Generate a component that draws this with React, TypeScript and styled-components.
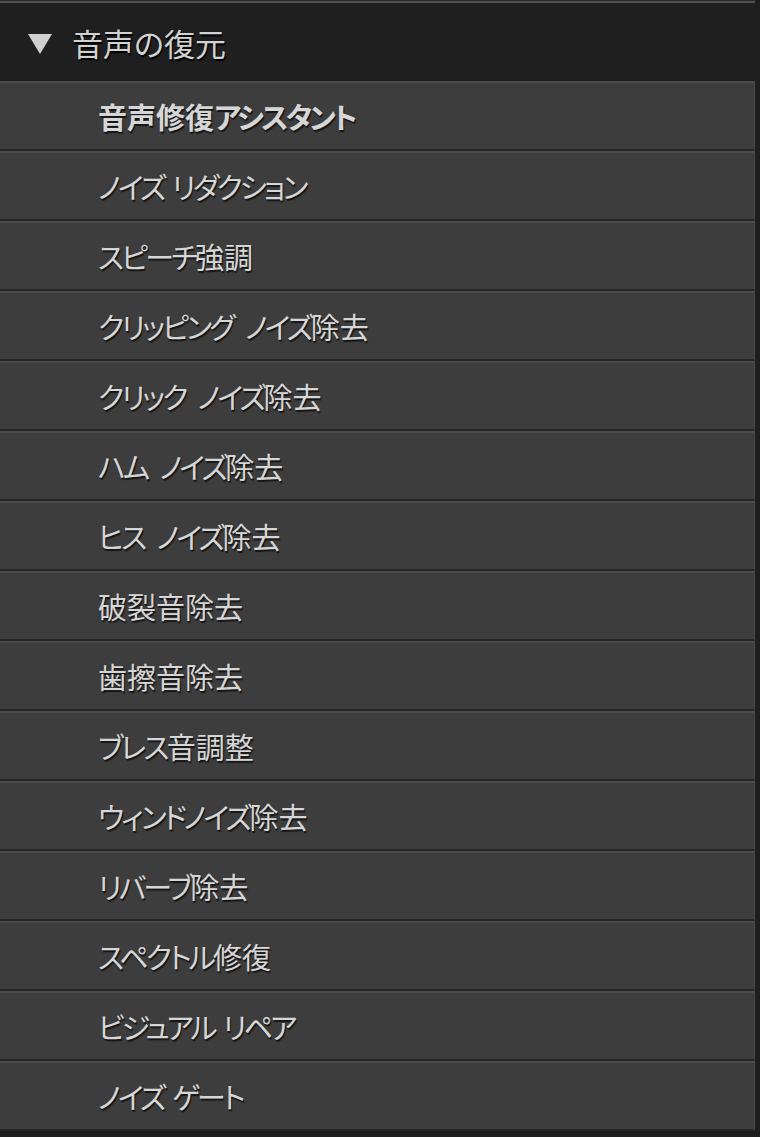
import React from "react";
import styled, { createGlobalStyle } from "styled-components";

const Global = createGlobalStyle`
  html, body { margin: 0; padding: 0; background: #1e1e1e; }
  body { font-family: "Noto Sans CJK JP", "Noto Sans", sans-serif; }
`;

const Panel = styled.div`
  width: 760px;
  height: 1137px;
  overflow: hidden;
  background: #1e1e1e;
  display: flex;
  flex-direction: column;
`;

const PrevEdge = styled.div`
  height: 4px;
  margin-right: 5px;
  box-sizing: border-box;
  border-top: 1px solid #2a2a2a;
  border-bottom: 1px solid #222;
  background: #505050;
`;

const Header = styled.div`
  height: 77px;
  display: flex;
  align-items: center;
  gap: 20px;
  padding-left: 28px;
  background: #1f1f1f;
  box-sizing: border-box;
`;

const Triangle = styled.span`
  width: 0;
  height: 0;
  border-left: 12px solid transparent;
  border-right: 12px solid transparent;
  border-top: 20px solid #cfcfcf;
  margin-top: 2px;
`;

const HeaderText = styled.span`
  font-size: 31px;
  color: #d2d2d2;
  font-feature-settings: "palt";
  text-shadow: 1px 2px 1px #000;
  line-height: 1;
`;

const Row = styled.div<{ $bold?: boolean }>`
  height: 70px;
  margin-right: 5px;
  box-sizing: border-box;
  background: #3d3d3d;
  border-top: 2px solid #4b4b4b;
  border-bottom: 2px solid #272727;
  border-right: 1px solid #4a4a4a;
  display: flex;
  align-items: center;
  padding-left: 98px;
  font-size: 29px;
  font-weight: ${(p) => (p.$bold ? 700 : 400)};
  color: #d6d6d6;
  font-feature-settings: "palt";
  text-shadow: 1px 2px 1px #151515;
  white-space: pre;
`;

const Kana = styled.span`
  letter-spacing: -2.8px;
`;

const Gap = styled.span<{ $w: number }>`
  display: inline-block;
  width: ${(p) => p.$w}px;
`;

const items = [
  "音声修復アシスタント",
  "ノイズ リダクション",
  "スピーチ強調",
  "クリッピング  ノイズ除去",
  "クリック  ノイズ除去",
  "ハム  ノイズ除去",
  "ヒス  ノイズ除去",
  "破裂音除去",
  "歯擦音除去",
  "ブレス音調整",
  "ウィンドノイズ除去",
  "リバーブ除去",
  "スペクトル修復",
  "ビジュアル リペア",
  "ノイズ ゲート",
];

function renderLabel(text: string) {
  const parts = text.match(/[\u30A0-\u30FF]+| +|[^\u30A0-\u30FF ]+/g) || [];
  return parts.map((p, i) => {
    if (p[0] === " ") return <Gap key={i} $w={p.length > 1 ? 12 : 8} />;
    if (/[\u30A0-\u30FF]/.test(p[0])) return <Kana key={i}>{p}</Kana>;
    return <React.Fragment key={i}>{p}</React.Fragment>;
  });
}

export default function App() {
  return (
    <Panel>
      <Global />
      <PrevEdge />
      <Header>
        <Triangle />
        <HeaderText>音声の復元</HeaderText>
      </Header>
      {items.map((t, i) => (
        <Row key={t} $bold={i === 0}>
          {renderLabel(t)}
        </Row>
      ))}
    </Panel>
  );
}
